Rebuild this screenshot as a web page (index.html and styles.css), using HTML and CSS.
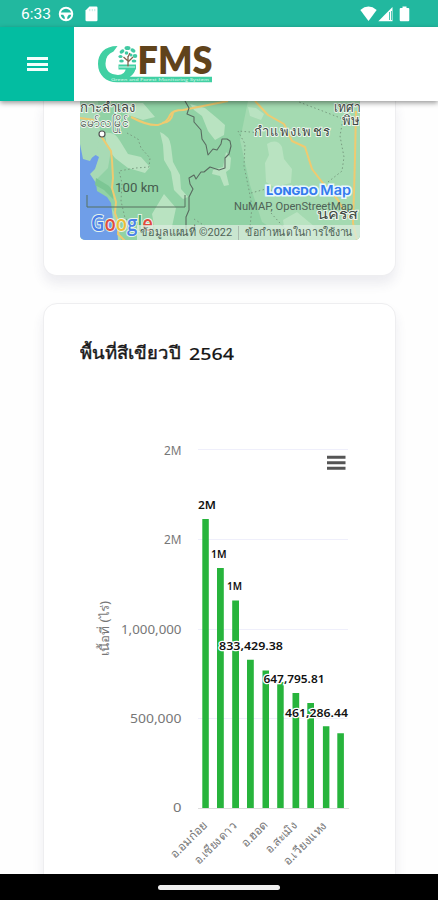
FILE: index.html
```html
<!DOCTYPE html>
<html lang="th">
<head>
<meta charset="utf-8">
<meta name="viewport" content="width=device-width, initial-scale=1">
<title>GFMS</title>
<link rel="stylesheet" href="styles.css">
</head>
<body>
<div class="phone">
  <div class="status">
    <span class="clock">6:33</span>
    <svg class="wheel" width="16" height="16" viewBox="0 0 16 16"><circle cx="8" cy="8" r="6.3" fill="none" stroke="#fff" stroke-width="1.9"/><path d="M2 6.5h12v2.3H10.8L9.3 11v3.5H6.7V11L5.2 8.800H2z" fill="#fff"/></svg>
    <svg class="sd" width="13" height="16" viewBox="0 0 13 16"><path d="M4.500.5H11.300q1.200 0 1.200 1.200V14q0 1.300-1.200 1.300H1.700Q.5 15.300.5 14V4.500z" fill="#fff"/><path d="M4.800 3v2.200M7.300 3v2.200M9.800 3v2.200" stroke="#b9e9df" stroke-width=".9"/></svg>
    <svg class="signals" width="50" height="16" viewBox="0 0 50 16"><path d="M.3 4Q8.500-2.800 16.700 4L8.500 15z" fill="#fff"/><path d="M32.500 1V15.300H18.300z" fill="#fff"/><path d="M29.500 6v8M31.500 5v9" stroke="#22b89f" stroke-width=".8"/><path d="M42.500.5h4V2h1.800q1 0 1 1v11q0 1.300-1 1.300h-7.600q-1 0-1-1.300V3q0-1 1-1h1.800z" fill="#fff"/></svg>
  </div>
  <header class="header">
    <button class="menu" aria-label="เมนู"><i></i><i></i><i></i></button>
    <svg class="logo" width="118" height="44" viewBox="97 41 118 44">
      <path d="M117.500 46C104 46 98 54 98 64 98 75 106 82.300 117 82.300H212V76.700H130Q135 73.500 135.500 68H126Q125 75 118 75 105.500 74 105.500 63.500 105.500 54.500 113.500 51.500z" fill="#41d0a3"/>
      <path d="M118.500 64.500h17.500v5h-17.500z" fill="#41d0a3"/>
      <g fill="#41c9a2"><ellipse cx="127.500" cy="48" rx="3" ry="2"/><ellipse cx="133" cy="50.500" rx="2.700" ry="1.900" transform="rotate(35 133 50.500)"/><ellipse cx="122" cy="51.500" rx="2.600" ry="1.800" transform="rotate(-35 122 51.500)"/><ellipse cx="120.500" cy="56.500" rx="2.100" ry="1.600"/><ellipse cx="135" cy="56" rx="2.300" ry="1.900"/><ellipse cx="134" cy="61" rx="2.400" ry="1.600"/><ellipse cx="121.500" cy="61" rx="2.300" ry="1.600"/><circle cx="126.500" cy="53" r="1.800"/><circle cx="131" cy="55" r="1.500"/></g>
      <path d="M128 67V56M128 61l-4.500-4M128 62l5-5M128 57l2-4" stroke="#85624d" stroke-width="1.300" fill="none"/>
      <path d="M119 67h16" stroke="#d9f6ec" stroke-width="1"/>
      <text class="brand" x="137.500" y="73.500" textLength="75" lengthAdjust="spacingAndGlyphs">FMS</text>
      <text class="tag" x="111" y="81" textLength="98" lengthAdjust="spacingAndGlyphs">Green and Forest Monitoring System</text>
    </svg>
  </header>
  <main class="content">
    <section class="card map-card">
      <svg class="map" width="280" height="139" viewBox="80 101 280 139">
        <rect x="80" y="101" width="280" height="139" fill="#91d2a5"/>
        <path d="M248 101H360V240H290L262 222 250 185 240 140z" fill="#a4dab1"/>
        <g fill="#b9e3c1">
          <path d="M105 133q10-2 15 8l8 13 13 3 9 10-5 6-17-5-13-10-8-10z"/>
          <path d="M160 132q10 4 11 14l2 16 7 13 1 14 7 8-5 2-9-9-3-18-7-12-1-15z"/>
          <path d="M190 104l15 4 12 10 8 7-1 10-9 5-7-9-6-15-8-6z"/>
          <path d="M267 144q10-6 15 3l2 12 8 10-1 14-17 4-8-5-1-19 4-8z"/>
          <path d="M248 107l8 1 8 6-3 6-11-4zM226 152l5 6-1 11-4 3 3 13-5 1-4-10-8-2 1-4 10-3z"/>
          <path d="M152 214l12-20 12 14-6 28h-14zM283 220l14-8 18 15-6 13h-23zM123 103h20l12 14-12 3-15-5z"/>
        </g>
        <path d="M80 101h18l2 30 11 19-3 18-12 12-1 12 10 6 11 17 5 25H80z" fill="#a8dab5"/>
        <path d="M80 144l3 15 7 2 4-7 5 3-4 12-5 5 6 9 1 8 10 6 4 6 2 16 4 7 1 14H80z" fill="#6f9ee8"/>
        <path d="M80 126l14-1 5 9-2 20-7 5-6-2z" fill="#a8dab5"/>
        <path d="M96 178l13 8 5 7-1 6-9-9-9-5z" fill="#7cc694"/>
        <g fill="none" stroke="#789b7f" stroke-width="1" stroke-dasharray="1.500 2.500"><path d="M127 133l11 6 3 9 9 10-1 9-13 1-17 3 3 12-1 18 4 17 10 9"/><path d="M262 133l-24-2 7 13-1 22 5 24 3 17-2 20"/><path d="M328 182l14-11 2-14-4-21 3-17-23-9-21-8"/><path d="M251 193l15-4 13 3M271 213l16 18M194 219l11 7"/></g>
        <g fill="none" stroke="#efca70" stroke-width="2" stroke-linejoin="round"><path d="M80 118l14 2"/><path d="M101 136q6 9 10 15l1 9 1 18-1 10 4 14-1 11 4 11-1 10 10 10"/><path d="M131 117q17 9 27 8 9-2 12-10 3-5 13-5l15-3 30-6"/><path d="M162 123q9 0 11-10"/><path d="M255 101l13 14 16 9 8 17 13 6 7 22 10 13 16 18 10 18"/><path d="M356 111l-1 46-1 36-1 30 4 17"/></g>
        <path d="M185 101l4 7-2 6 7 3 0 5 7 8 1 9 4 6 2 10 5-6 4 1 4-6 1-5 5 0 3 2 1 5-2 8-4 4v10l-6 2-9-3-6 5h-3l-5 7-2-4-5 3 1 6 3 5-4 8 0 13-3 7v15" fill="none" stroke="#596b60" stroke-width="1.100" stroke-linejoin="round"/>
        <circle cx="102" cy="134" r="3" fill="#fff" stroke="#555" stroke-width="1.200"/>
        <g class="place"><text x="80" y="112" textLength="55" lengthAdjust="spacingAndGlyphs">กาะลำเลง</text><text x="80" y="127" textLength="49" lengthAdjust="spacingAndGlyphs">မော်လမြိုင်</text><text x="254" y="136" textLength="76" lengthAdjust="spacing">กำแพงเพชร</text><text x="334" y="112" textLength="26" lengthAdjust="spacingAndGlyphs">เทศา</text><text x="342" y="125" textLength="18" lengthAdjust="spacingAndGlyphs">พิษ</text><text x="317" y="219" textLength="41" lengthAdjust="spacingAndGlyphs">นครส</text></g>
        <path d="M87 195v12h98v-12" fill="none" stroke="#56705f" stroke-width="1"/>
        <text class="scale" x="115" y="191.500" textLength="44" lengthAdjust="spacingAndGlyphs">100 km</text>
        <text class="google" x="91" y="231" textLength="62" lengthAdjust="spacingAndGlyphs"><tspan fill="#4a80e8">G</tspan><tspan fill="#e14b3d">o</tspan><tspan fill="#edbd36">o</tspan><tspan fill="#4a80e8">g</tspan><tspan fill="#4cab67">l</tspan><tspan fill="#e14b3d">e</tspan></text>
        <rect x="137" y="225" width="223" height="15" fill="#dcecdf" opacity=".75"/>
        <text class="longdo" x="266" y="194.500" textLength="85" lengthAdjust="spacingAndGlyphs"><tspan class="longdo-big">L</tspan>ONGDO <tspan class="longdo-map">Map</tspan></text>
        <text class="credit" x="234" y="210" textLength="119" lengthAdjust="spacingAndGlyphs">NuMAP, OpenStreetMap</text>
        <text class="credit" x="140" y="236" textLength="92" lengthAdjust="spacingAndGlyphs">ข้อมูลแผนที่ ©2022</text>
        <path d="M238.500 226v14" stroke="#aabcae"/>
        <text class="credit" x="245" y="236" textLength="108" lengthAdjust="spacingAndGlyphs">ข้อกำหนดในการใช้งาน</text>
      </svg>
    </section>
    <section class="card chart-card">
      <h2><svg width="160" height="32" viewBox="80 335 160 32"><text class="title" x="80" y="359" textLength="101" lengthAdjust="spacingAndGlyphs">พื้นที่สีเขียวปี</text><text class="title year" x="189" y="359.500" textLength="45" lengthAdjust="spacingAndGlyphs">2564</text></svg></h2>
      <svg class="chart" width="280" height="454" viewBox="80 420 280 454">
        <path d="M198 449.500H348M198 539.500H348M198 629.500H348M198 718.500H348" stroke="#efeffb"/>
        <path d="M198 808.500H349" stroke="#ddd"/>
        <g fill="#27b43c"><path d="M202.300 519h6.500v289h-6.500zM217 568h6.800v240H217zM232.200 600.500h6.800V808h-6.800zM247 659.800h6.800V808H247zM262.500 670.500h6.500V808h-6.500zM277.200 682h6.500v126h-6.500zM292.500 693h6.700v115h-6.700zM307.300 703h6.700v105h-6.700zM322.900 726.300h6.500V808h-6.500zM337.300 733.200h6.600V808h-6.600z"/></g>
        <g class="axis"><text x="164" y="454.500" textLength="17.500" lengthAdjust="spacingAndGlyphs">2M</text><text x="164" y="543.800" textLength="17.500" lengthAdjust="spacingAndGlyphs">2M</text><text x="121" y="633.500" textLength="60.500" lengthAdjust="spacingAndGlyphs">1,000,000</text><text x="130" y="723" textLength="51.500" lengthAdjust="spacingAndGlyphs">500,000</text><text x="173" y="812" textLength="8.500" lengthAdjust="spacingAndGlyphs">0</text>
        <text transform="translate(109 656) rotate(-90)" textLength="55" lengthAdjust="spacingAndGlyphs">เนื้อที่ (ไร่)</text></g>
        <g class="axis"><text transform="translate(175 859) rotate(-45)" textLength="46" lengthAdjust="spacingAndGlyphs">อ.อมก๋อย</text><text transform="translate(199 865) rotate(-45)" textLength="54" lengthAdjust="spacingAndGlyphs">อ.เชียงดาว</text><text transform="translate(246 848) rotate(-45)" textLength="32" lengthAdjust="spacingAndGlyphs">อ.ฮอด</text><text transform="translate(270 854) rotate(-45)" textLength="39" lengthAdjust="spacingAndGlyphs">อ.สะเมิง</text><text transform="translate(288 866) rotate(-45)" textLength="56" lengthAdjust="spacingAndGlyphs">อ.เวียงแหง</text></g>
        <g class="values"><text x="198" y="508.500" textLength="18" lengthAdjust="spacingAndGlyphs">2M</text><text x="211" y="557.800" textLength="15.500" lengthAdjust="spacingAndGlyphs">1M</text><text x="227" y="590.300" textLength="15" lengthAdjust="spacingAndGlyphs">1M</text><text x="219" y="649.500" textLength="64" lengthAdjust="spacingAndGlyphs">833,429.38</text><text x="263.500" y="682.700" textLength="61" lengthAdjust="spacingAndGlyphs">647,795.81</text><text x="285" y="716.500" textLength="63" lengthAdjust="spacingAndGlyphs">461,286.44</text></g>
        <path d="M327 457.200h18.500M327 462.700h18.500M327 468.300h18.500" stroke="#555" stroke-width="3"/>
      </svg>
    </section>
  </main>
  <div class="navbar"><span></span></div>
</div>
</body>
</html>
```
FILE: styles.css
```css
* { box-sizing: border-box; }
body { margin: 0; background: #fff; font-family: "Noto Sans", "Liberation Sans", sans-serif; }
svg { display: block; flex: none; }
.phone { width: 438px; height: 900px; display: flex; flex-direction: column; overflow: hidden; }
.status { height: 27px; flex: none; display: flex; align-items: center; padding: 1px 28px 0 21px; background: #22b89f; }
.clock { width: 37px; color: #fff; font: 400 15.5px/27px Roboto, sans-serif; }
.sd { margin-left: 11px; }
.signals { margin-left: auto; }
.header { height: 74px; flex: none; display: flex; background: #fff; box-shadow: 0 2px 5px rgba(0, 0, 0, .4); position: relative; z-index: 1; }
.menu { width: 74px; height: 74px; padding: 0; border: 0; background: #03bda1; display: flex; flex-direction: column; align-items: center; justify-content: center; gap: 2.5px; }
.menu i { width: 21px; height: 3px; background: #f4fffc; }
.logo { margin: 14px 0 0 23px; }
.brand { font: 800 38px Lato, sans-serif; fill: #60431b; }
.tag { font: 700 4.5px Lato, sans-serif; fill: #b5efdb; }
.content { flex: 1; min-height: 0; overflow: hidden; padding: 0 42px 0 43px; display: flex; flex-direction: column; gap: 27px; background: #fefefe; }
.card { flex: none; background: #fff; border: 1px solid #eeeef0; box-shadow: 0 8px 12px rgba(50, 50, 95, .09); padding: 0 36px; }
.map-card { height: 175px; border-top: 0; border-radius: 0 0 14px 14px; }
.map { border-radius: 0 0 5px 5px; }
.chart-card { height: 610px; border-radius: 14px 14px 0 0; padding-top: 31px; }
h2 { margin: 0 0 53px; }
.title { font: 500 17px "Noto Sans", sans-serif; fill: #171717; stroke: #171717; stroke-width: .4px; }
.year { font-weight: 500; font-size: 16.5px; stroke-width: .1px; }
.place { font: 500 13px "Noto Sans", sans-serif; fill: #3f4a43; paint-order: stroke; stroke: #ecf5ed; stroke-width: 2px; }
.scale { font: 13px Roboto, sans-serif; fill: #465c4e; }
.google { font: 600 21px "Open Sans", sans-serif; paint-order: stroke; stroke: #e7f5ed; stroke-width: 2px; }
.longdo { font: 800 10.5px Inter, sans-serif; fill: #347bee; paint-order: stroke; stroke: #e9f7ff; stroke-width: 3px; }
.longdo-big { font-size: 12px; }
.longdo-map { font-size: 13px; font-weight: 600; }
.credit { font: 11px Roboto, "Noto Sans", sans-serif; fill: #4f6256; }
.axis { font: 400 12px "Noto Sans", sans-serif; fill: #777; }
.values { font: 600 11.5px "Noto Sans", sans-serif; fill: #111; paint-order: stroke; stroke: #fff; stroke-width: 2.5px; }
.navbar { height: 26px; flex: none; display: flex; align-items: center; justify-content: center; background: #000; }
.navbar span { width: 122px; height: 5px; border-radius: 3px; background: #eee; }
```
